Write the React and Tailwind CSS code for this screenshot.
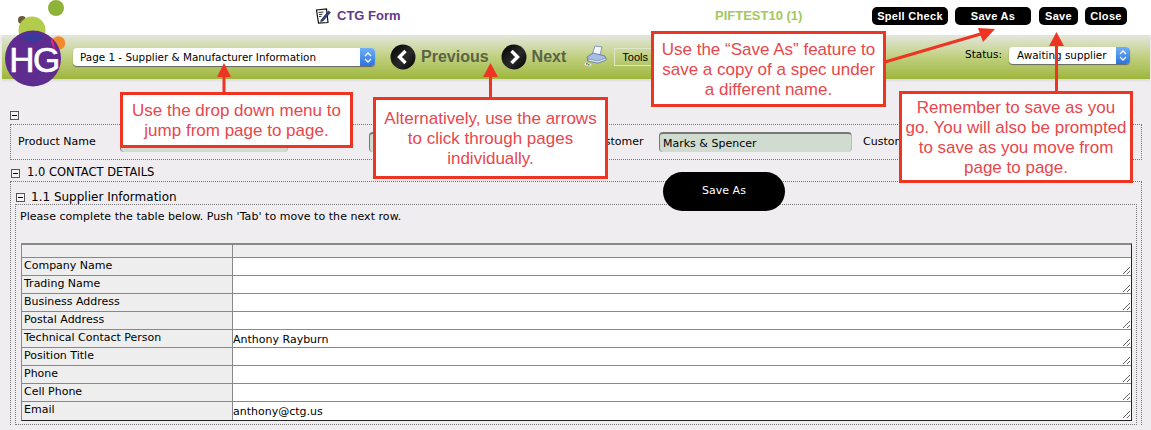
import React from 'react';

const form_font = { fontFamily: '"DejaVu Sans", sans-serif' };
const head_font = { fontFamily: '"Liberation Sans", sans-serif' };

const rows = [
  { label: "Company Name", value: "" },
  { label: "Trading Name", value: "" },
  { label: "Business Address", value: "" },
  { label: "Postal Address", value: "" },
  { label: "Technical Contact Person", value: "Anthony Rayburn" },
  { label: "Position Title", value: "" },
  { label: "Phone", value: "" },
  { label: "Cell Phone", value: "" },
  { label: "Email", value: "anthony@ctg.us" },
];

const callouts = [
  { box: "left-[120px] top-[92px] w-[233px] h-[56px]", text: <>Use the drop down menu to<br />jump from page to page.</> },
  { box: "left-[373px] top-[97px] w-[235px] h-[82px]", text: <>Alternatively, use the arrows<br />to click through pages<br />individually.</> },
  { box: "left-[651px] top-[31px] w-[235px] h-[76px]", text: <>Use the “Save As” feature to<br />save a copy of a spec under<br />a different name.</> },
  { box: "left-[899px] top-[91px] w-[234px] h-[92px]", text: <>Remember to save as you<br />go. You will also be prompted<br />to save as you move from<br />page to page.</> },
];

function Minus({ className }) {
  return (
    <span className={`flex items-center justify-center w-[9px] h-[9px] border border-[#555] bg-[#f4f4f4] shrink-0 ${className || ""}`}>
      <span className="block w-[5px] h-px bg-black"></span>
    </span>
  );
}

function BlackButton({ children, className }) {
  return (
    <button className={`h-[18px] rounded-[5px] bg-black text-white text-[11px] font-bold leading-none tracking-[0.3px] ${className}`} style={head_font}>
      {children}
    </button>
  );
}

function Stepper({ className }) {
  return (
    <span className={`flex flex-col items-center justify-center h-full rounded-r-[4px] bg-gradient-to-b from-[#6fb0f5] to-[#2b72de] ${className}`}>
      <svg width="8" height="13" viewBox="0 0 8 13" fill="none" stroke="white" strokeWidth="1.3">
        <path d="M1 5 L4 2 L7 5" />
        <path d="M1 8 L4 11 L7 8" />
      </svg>
    </span>
  );
}

function RoundArrow({ dir }) {
  return (
    <svg width="26" height="26" viewBox="0 0 26 26">
      <defs>
        <linearGradient id={`ball-${dir}`} x1="0" y1="0" x2="1" y2="1">
          <stop offset="0" stopColor="#000" />
          <stop offset="0.55" stopColor="#2a2a2a" />
          <stop offset="1" stopColor="#000" />
        </linearGradient>
      </defs>
      <circle cx="13" cy="13" r="12.5" fill={`url(#ball-${dir})`} />
      <path d={dir === "left" ? "M15.5 7 L9.5 13 L15.5 19" : "M10.5 7 L16.5 13 L10.5 19"} fill="none" stroke="white" strokeWidth="3.4" />
    </svg>
  );
}

function Printer() {
  return (
    <svg width="24" height="24" viewBox="0 0 24 24">
      <path d="M11 2 L18 3 L16 11 L8 11 Z" fill="#f2f5fb" stroke="#6f86b5" strokeWidth="0.8" />
      <path d="M3 13 L9 9 L21 12 L22 16 L14 19 L4 17 Z" fill="#a9bde3" stroke="#4f6797" strokeWidth="0.7" />
      <path d="M4 15 L14 17 L22 14 L22 16 L14 19 L4 17 Z" fill="#e3eaf8" stroke="#4f6797" strokeWidth="0.5" />
      <path d="M1 18 L8 20 L6 23 L0 21 Z" fill="#f7f7f2" stroke="#888" strokeWidth="0.3" />
      <rect x="2" y="19" width="1.6" height="1.6" fill="#d8392f" />
      <rect x="4" y="20" width="1.6" height="1.6" fill="#3c9b3c" />
    </svg>
  );
}

function FormIcon() {
  return (
    <svg width="16" height="16" viewBox="0 0 16 16">
      <path d="M1.5 2 L11.5 1 L13 14.5 L3.5 15 Z" fill="#fff" stroke="#111" strokeWidth="1.2" />
      <path d="M3.5 4.5 L8.5 4 M4 6.5 L7.5 6.2 M4 8.5 L6.5 8.3" stroke="#333" strokeWidth="1" />
      <path d="M6 12 L13.5 3 L15.5 4.5 L8 13 L5.5 13.5 Z" fill="#24408f" stroke="#111" strokeWidth="0.5" />
    </svg>
  );
}

function Logo() {
  return (
    <svg className="absolute left-0 top-0" width="70" height="90" viewBox="0 0 70 90" style={head_font}>
      <circle cx="56" cy="8" r="8" fill="#8fb339" />
      <circle cx="24" cy="22" r="4" fill="#f2e84a" />
      <circle cx="22" cy="20" r="4" fill="#6d5a3a" />
      <circle cx="32" cy="30" r="13.5" fill="#b2cc4b" />
      <circle cx="58.5" cy="43" r="6.8" fill="#f08a2c" />
      <circle cx="33" cy="58.5" r="28" fill="#5e2b8f" />
      <path d="M21 36 A13.5 13.5 0 0 0 44 36 A28 28 0 0 0 21 36 Z" fill="#3a3a9c" />
      <path d="M52 38 A7 7 0 0 0 52.5 46 L55 50 A28 28 0 0 0 52 38 Z" fill="#e0257f" />
      <text x="34" y="72" textAnchor="middle" fill="white" stroke="white" strokeWidth="0.7" fontSize="35" letterSpacing="-1.5">HG</text>
    </svg>
  );
}

function GrayInput({ className, children }) {
  return (
    <div className={`h-[20px] rounded-[4px] bg-[#cfdccf] border-t-2 border-l border-r border-[#777] border-r-[#bbb] text-[11px] leading-[19px] pl-[3px] text-black ${className}`}>
      {children}
    </div>
  );
}

export default function App() {
  return (
    <div className="relative w-[1151px] h-[430px] overflow-hidden bg-[#f0edf0] text-black" style={form_font}>
      {/* Title row */}
      <div className="h-[35px] bg-white flex items-center">
        <div className="ml-[315px] w-[400px] flex items-center gap-[6px] pb-[3px]">
          <FormIcon />
          <span className="text-[13px] font-bold text-[#5f3a8c]" style={head_font}>CTG Form</span>
        </div>
        <span className="w-[88px] whitespace-nowrap text-[13px] font-bold text-[#a3c85c] pb-[3px]" style={head_font}>PIFTEST10 (1)</span>
        <div className="ml-[69px] flex items-center pb-[3px]">
          <BlackButton className="w-[76px]">Spell Check</BlackButton>
          <BlackButton className="ml-[7px] w-[76px]">Save As</BlackButton>
          <BlackButton className="ml-[8px] w-[39px]">Save</BlackButton>
          <BlackButton className="ml-[7px] w-[42px]">Close</BlackButton>
        </div>
      </div>

      {/* Green toolbar */}
      <div className="ml-[2px] mr-px h-[44px] flex items-center bg-gradient-to-b from-[#e4e6dc] via-[#c0d07e] to-[#9fb63a] shadow-[0_2px_2px_#dcdcdc]">
        <div className="ml-[71px] w-[302px] h-[18px] flex rounded-[4px] bg-white shadow-[0_1px_1px_#666]">
          <span className="flex-1 text-[10.4px] leading-[18px] pl-[7px] whitespace-nowrap">Page 1 - Supplier &amp; Manufacturer Information</span>
          <Stepper className="w-[15px]" />
        </div>
        <div className="ml-[15px] flex items-center gap-[5px]">
          <RoundArrow dir="left" />
          <span className="text-[16px] font-bold text-[#5b6344]" style={head_font}>Previous</span>
        </div>
        <div className="ml-[12px] flex items-center gap-[5px]">
          <RoundArrow dir="right" />
          <span className="text-[16px] font-bold text-[#5b6344]" style={head_font}>Next</span>
        </div>
        <div className="ml-[18px] -mt-[2px]"><Printer /></div>
        <div className="ml-[6px] h-[18px] w-[50px] border border-[#dfe6c8] text-[11px] leading-[16px] pl-[7px]" style={head_font}>Tools</div>
        <div className="ml-auto flex items-center gap-[7px] mr-[20px] -mt-[4px]">
          <span className="text-[10.5px]">Status:</span>
          <div className="w-[121px] h-[17px] flex rounded-[4px] bg-white shadow-[0_1px_1px_#666]">
            <span className="flex-1 text-[10.4px] leading-[17px] pl-[8px] whitespace-nowrap">Awaiting supplier</span>
            <Stepper className="w-[14px]" />
          </div>
        </div>
      </div>

      {/* Form */}
      <div className="pl-[10px] pr-[9px]">
        <Minus className="mt-[32px]" />
        <div className="mt-[4px] h-[36px] border border-dotted border-[#777] flex items-center text-[11px]">
          <span className="ml-[7px] w-[102px]">Product Name</span>
          <GrayInput className="w-[168px]" />
          <GrayInput className="ml-[81px] w-[100px]" />
          <span className="ml-[121px] w-[69px] text-right pr-[23px]">Customer</span>
          <GrayInput className="w-[193px]">Marks &amp; Spencer</GrayInput>
          <span className="ml-[11px] whitespace-nowrap">Customer</span>
        </div>
        <div className="h-[21px] flex items-center gap-[7px] pl-[1px] pt-[5px]">
          <Minus />
          <span className="text-[11.5px]">1.0 CONTACT DETAILS</span>
        </div>
        <div className="border-t border-l border-r border-dotted border-[#777] h-[244px] px-[4px]">
          <div className="h-[22px] flex items-center gap-[6px] pl-[1px] pt-[8px]">
            <Minus />
            <span className="text-[12px]">1.1 Supplier Information</span>
          </div>
          <div className="h-[221px] border border-dotted border-[#777] pl-[4px] pr-[4px]">
            <p className="text-[11px] leading-[13px] mt-[5px] tracking-[0.04px]">Please complete the table below. Push 'Tab' to move to the next row.</p>
            <div className="mt-[20px] ml-px border-t-2 border-l border-[#888] border-r border-r-[#222] border-b border-b-[#222] grid grid-cols-[211px_1fr]">
              <div className="h-[13px] bg-[#eeeeee] border-r border-b border-[#888]"></div>
              <div className="h-[13px] bg-[#eeeeee] border-b border-[#888]"></div>
              {rows.map((row, i) => (
                <React.Fragment key={i}>
                  <div className={`h-[18px] bg-[#eeeeee] border-r border-[#888] text-[11px] leading-[15px] pl-[2px] ${i < rows.length - 1 ? "border-b" : ""}`}>
                    {row.label}
                  </div>
                  <div className={`h-[18px] bg-white border-[#888] ${i < rows.length - 1 ? "border-b" : ""}`}>
                    <textarea
                      readOnly
                      defaultValue={row.value}
                      className="block w-full h-[17px] resize overflow-hidden outline-none text-[11px] leading-[17px] pt-px"
                    />
                  </div>
                </React.Fragment>
              ))}
            </div>
          </div>
        </div>
      </div>

      {/* Overlays */}
      <Logo />

      <button className="absolute left-[663px] top-[172px] w-[122px] h-[39px] rounded-full bg-black text-white text-[11px]">Save As</button>

      {callouts.map((c, i) => (
        <div
          key={i}
          className={`absolute ${c.box} border-[3px] border-[#ee3524] bg-white flex items-center justify-center text-center text-[17px] leading-[20px] pt-[2px] text-[#e8474c] whitespace-nowrap`}
          style={head_font}
        >
          <span>{c.text}</span>
        </div>
      ))}

      <svg className="absolute left-0 top-0 pointer-events-none" width="1151" height="430" fill="#ee3524" stroke="none">
        <path d="M217 77 L224 63 L231 77 Z" />
        <rect x="222.5" y="76" width="3" height="17" />
        <path d="M483 77 L490.5 63 L498 77 Z" />
        <rect x="489" y="76" width="3" height="22" />
        <path d="M978 28 L995 29 L983 42 Z" />
        <path d="M885 62 L984 33" stroke="#ee3524" strokeWidth="3" />
        <path d="M1049 46 L1056.5 32 L1064 46 Z" />
        <rect x="1055" y="45" width="3" height="47" />
      </svg>
    </div>
  );
}
